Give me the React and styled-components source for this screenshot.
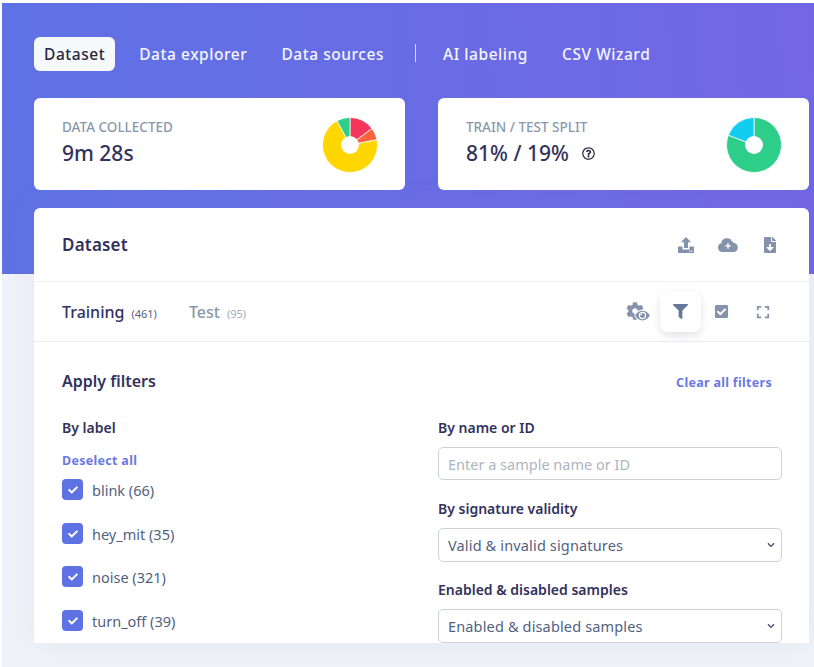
import React from "react";
import styled, { createGlobalStyle } from "styled-components";
import { FaCog, FaEye, FaFilter, FaCheckSquare, FaExpand, FaFileDownload, FaRegQuestionCircle, FaCheck, FaChevronDown } from "react-icons/fa";

const Global = createGlobalStyle`
  html, body { margin: 0; padding: 0; background: #fff; overflow: hidden; }
  * { box-sizing: border-box; }
  body { font-family: "Noto Sans", "Liberation Sans", sans-serif; }
`;

const Shell = styled.div`
  margin: 3px 0 0 2px;
  height: 664px;
  overflow: hidden;
  padding: 34px 5px 0 32px;
  background: linear-gradient(87deg, #5e72e4 0%, #7266e4 100%) top / 100% 271px no-repeat, #f0f2f9;
`;
const Nav = styled.nav`
  display: flex;
  align-items: center;
  height: 34px;
  margin-bottom: 27px;
`;
const NavItem = styled.a`
  height: 34px;
  line-height: 34px;
  padding: 0 10px;
  margin-right: ${p => p.$gap ?? 14}px;
  border-radius: 6px;
  font-size: 15.5px;
  font-weight: 500;
  letter-spacing: 0.55px;
  white-space: nowrap;
  color: ${p => (p.$active ? "#26283a" : "#f4f5fd")};
  background: ${p => (p.$active ? "#f6f9fc" : "transparent")};
`;
const NavDivider = styled.span`
  width: 1px;
  height: 18px;
  margin: -2px 17px 0 7px;
  background: rgba(255, 255, 255, 0.75);
`;
const Stats = styled.div`
  display: grid;
  grid-template-columns: 371px 371px;
  column-gap: 33px;
  margin-bottom: 18px;
`;
const StatCard = styled.section`
  height: 92px;
  padding: 0 27px 0 28px;
  background: #fff;
  border-radius: 6px;
  display: flex;
  align-items: center;
  justify-content: space-between;
`;
const StatText = styled.div`
  display: flex;
  flex-direction: column;
  margin-top: -2px;
`;
const StatTitle = styled.span`
  font-size: 13.5px;
  font-weight: 500;
  line-height: 20px;
  color: #8898aa;
  letter-spacing: 0;
`;
const StatValue = styled.span`
  font-size: 21px;
  font-weight: 500;
  line-height: 32px;
  color: #32325d;
  display: flex;
  align-items: center;
`;
const HelpIcon = styled(FaRegQuestionCircle)`
  width: 13px;
  height: 13px;
  margin-left: 13px;
  color: #26283a;
`;
const PieSvg = styled.svg`
  width: 56px;
  height: 56px;
  margin-top: 1px;
  flex: none;
`;
const Panel = styled.main`
  background: #fff;
  border-radius: 6px 6px 0 0;
  box-shadow: 0 0 2rem 0 rgba(136, 152, 170, 0.1);
`;
const PanelHead = styled.header`
  height: 74px;
  padding: 0 31px 0 28px;
  display: flex;
  align-items: center;
  justify-content: space-between;
  border-bottom: 1px solid #edeff3;
`;
const PanelTitle = styled.h2`
  margin: 0;
  font-size: 17px;
  font-weight: 600;
  color: #32325d;
  letter-spacing: 0.2px;
`;
const IconRow = styled.div`
  display: flex;
  align-items: center;
  gap: ${p => p.$gap}px;
  color: #8492ab;
`;
const Tabs = styled.div`
  height: 60px;
  padding: 0 26px 0 28px;
  display: flex;
  align-items: center;
  justify-content: space-between;
  border-bottom: 1px solid #e9ecef;
`;
const TabList = styled.div`
  display: flex;
  align-items: baseline;
  gap: 32px;
`;
const Tab = styled.span`
  font-size: 16px;
  font-weight: 500;
  color: ${p => (p.$active ? "#32325d" : "#8898aa")};
`;
const TabCount = styled.small`
  font-size: 11px;
  font-weight: 400;
  margin-left: 7px;
  color: ${p => (p.$active ? "#525f7f" : "#a0acbd")};
`;
const ToolButton = styled.div`
  width: 41px;
  height: 41px;
  border-radius: 8px;
  display: flex;
  align-items: center;
  justify-content: center;
  background: ${p => (p.$active ? "#fff" : "transparent")};
  box-shadow: ${p => (p.$active ? "0 4px 8px rgba(50, 50, 93, 0.13)" : "none")};
  color: ${p => (p.$active ? "#66789a" : "#8492ab")};
`;
const CogEyeWrap = styled.div`
  position: relative;
  width: 25px;
  height: 20px;
  margin-right: 9px;
`;
const CogPart = styled(FaCog)`
  position: absolute;
  left: 0;
  top: 0;
  width: 18px;
  height: 18px;
`;
const EyePart = styled(FaEye)`
  position: absolute;
  left: 9px;
  top: 7px;
  width: 15px;
  height: 13px;
  padding: 0;
  stroke: #fff;
  stroke-width: 60px;
  paint-order: stroke;
  overflow: visible;
`;
const Filters = styled.div`
  padding: 27px 27px 0 28px;
`;
const FilterHead = styled.div`
  display: flex;
  align-items: center;
  justify-content: space-between;
  padding-right: 10px;
  margin-bottom: 25px;
  height: 24px;
`;
const FilterTitle = styled.h3`
  margin: 0;
  font-size: 16px;
  font-weight: 600;
  color: #32325d;
`;
const LinkText = styled.a`
  font-size: 12.5px;
  font-weight: 700;
  letter-spacing: 0.3px;
  color: #6a79e4;
  display: block;
  line-height: 18px;
`;
const ClearLink = styled(LinkText)`
  margin-top: 4px;
`;
const Columns = styled.div`
  display: grid;
  grid-template-columns: 376px 344px;
`;
const Column = styled.div`
  display: flex;
  flex-direction: column;
`;
const FieldLabel = styled.label`
  display: block;
  font-size: 14px;
  font-weight: 600;
  line-height: 20px;
  color: #32325d;
  margin-bottom: ${p => p.$mb ?? 9}px;
`;
const CheckRow = styled.div`
  display: flex;
  align-items: center;
  height: 21px;
  margin-bottom: ${p => p.$mb}px;
`;
const CheckBox = styled.span`
  width: 21px;
  height: 21px;
  border-radius: 4px;
  background: #5e72e4;
  color: #fff;
  display: flex;
  align-items: center;
  justify-content: center;
  margin-right: 9px;
  font-size: 10px;
`;
const CheckText = styled.span`
  font-size: 14.5px;
  color: #525f7f;
`;
const TextInput = styled.input`
  width: 100%;
  height: 33px;
  padding: 0 9px;
  border: 1px solid #cdd2da;
  border-radius: 5px;
  font: 400 14.5px "Noto Sans", sans-serif;
  color: #525f7f;
  margin-bottom: 19px;
  outline: none;
  &::placeholder { color: #adb5bd; opacity: 1; }
`;
const SelectWrap = styled.div`
  position: relative;
  height: 34px;
  margin-bottom: ${p => p.$mb ?? 18}px;
`;
const Select = styled.select`
  appearance: none;
  width: 100%;
  height: 34px;
  padding: 0 9px;
  border: 1px solid #cdd2da;
  border-radius: 5px;
  background: #fff;
  font: 400 14.5px "Noto Sans", sans-serif;
  letter-spacing: 0.15px;
  color: #525f7f;
  outline: none;
`;
const Chevron = styled(FaChevronDown)`
  position: absolute;
  right: 6px;
  top: 13px;
  width: 10px;
  height: 8px;
  color: #3f4d69;
  pointer-events: none;
`;

const polar = (r, deg) => {
  const a = ((deg - 90) * Math.PI) / 180;
  return [28 + r * Math.cos(a), 28 + r * Math.sin(a)];
};
const slicePath = (from, to) => {
  const [x1, y1] = polar(27.5, from);
  const [x2, y2] = polar(27.5, to);
  const large = to - from > 180 ? 1 : 0;
  return `M28 28L${x1} ${y1}A27.5 27.5 0 ${large} 1 ${x2} ${y2}Z`;
};
const Pie = ({ slices }) => (
  <PieSvg viewBox="0 0 56 56">
    {slices.map(([from, to, color]) => (
      <path key={color} d={slicePath(from, to)} fill={color} stroke="#fff" strokeOpacity="0.75" strokeWidth="1" />
    ))}
    <circle cx="28" cy="28" r="9" fill="#fff" />
  </PieSvg>
);

const UploadIcon = () => (
  <svg width="16" height="16" viewBox="0 0 16 16" fill="currentColor">
    <path d="M8 0L13.2 5.2H10V11H6V5.2H2.8Z" />
    <path d="M0 9.5H4.5V12.5H11.5V9.5H16V16H0Z" />
    <rect x="11" y="13.6" width="1.3" height="1" fill="#fff" />
    <rect x="13.2" y="13.6" width="1.3" height="1" fill="#fff" />
  </svg>
);
const CloudPlusIcon = () => (
  <svg width="20" height="14" viewBox="0 0 20 14">
    <path fill="currentColor" d="M4.5 14A4.5 4.5 0 0 1 3.2 5.2 5.6 5.6 0 0 1 8.8.2 5.2 5.2 0 0 1 14 3.4 3.4 3.4 0 0 1 16 4.9 4.6 4.6 0 0 1 15.5 14Z" />
    <path fill="#fff" d="M9.3 5H10.7V7.2H12.9V8.6H10.7V10.8H9.3V8.6H7.1V7.2H9.3Z" />
  </svg>
);

const labels = [["blink (66)", 23], ["hey_mit (35)", 22], ["noise (321)", 23], ["turn_off (39)", 0]];

export default function App() {
  return (
    <>
      <Global />
      <Shell>
        <Nav>
          <NavItem $active>Dataset</NavItem>
          <NavItem>Data explorer</NavItem>
          <NavItem>Data sources</NavItem>
          <NavDivider />
          <NavItem>AI labeling</NavItem>
          <NavItem>CSV Wizard</NavItem>
        </Nav>
        <Stats>
          <StatCard>
            <StatText>
              <StatTitle>DATA COLLECTED</StatTitle>
              <StatValue>9m 28s</StatValue>
            </StatText>
            <Pie slices={[[0, 53, "#f5365c"], [53, 79, "#fb6340"], [79, 332, "#ffd600"], [332, 360, "#2dce89"]]} />
          </StatCard>
          <StatCard>
            <StatText>
              <StatTitle>TRAIN / TEST SPLIT</StatTitle>
              <StatValue>81% / 19%<HelpIcon /></StatValue>
            </StatText>
            <Pie slices={[[0, 291, "#2dce89"], [291, 360, "#11cdef"]]} />
          </StatCard>
        </Stats>
        <Panel>
          <PanelHead>
            <PanelTitle>Dataset</PanelTitle>
            <IconRow $gap={24}>
              <UploadIcon />
              <CloudPlusIcon />
              <FaFileDownload size={16} />
            </IconRow>
          </PanelHead>
          <Tabs>
            <TabList>
              <Tab $active>Training<TabCount $active>(461)</TabCount></Tab>
              <Tab>Test<TabCount>(95)</TabCount></Tab>
            </TabList>
            <IconRow $gap={0}>
              <CogEyeWrap><CogPart /><EyePart /></CogEyeWrap>
              <ToolButton $active><FaFilter size={15} /></ToolButton>
              <ToolButton><FaCheckSquare size={15} /></ToolButton>
              <ToolButton><FaExpand size={14} /></ToolButton>
            </IconRow>
          </Tabs>
          <Filters>
            <FilterHead>
              <FilterTitle>Apply filters</FilterTitle>
              <ClearLink>Clear all filters</ClearLink>
            </FilterHead>
            <Columns>
              <Column>
                <FieldLabel $mb={14}>By label</FieldLabel>
                <LinkText>Deselect all</LinkText>
                <div style={{ height: 9 }} />
                {labels.map(([text, mb]) => (
                  <CheckRow key={text} $mb={mb}>
                    <CheckBox><FaCheck /></CheckBox>
                    <CheckText>{text}</CheckText>
                  </CheckRow>
                ))}
              </Column>
              <Column>
                <FieldLabel>By name or ID</FieldLabel>
                <TextInput placeholder="Enter a sample name or ID" />
                <FieldLabel>By signature validity</FieldLabel>
                <SelectWrap>
                  <Select defaultValue="all"><option value="all">Valid &amp; invalid signatures</option></Select>
                  <Chevron />
                </SelectWrap>
                <FieldLabel>Enabled &amp; disabled samples</FieldLabel>
                <SelectWrap $mb={0}>
                  <Select defaultValue="all"><option value="all">Enabled &amp; disabled samples</option></Select>
                  <Chevron />
                </SelectWrap>
              </Column>
            </Columns>
          </Filters>
        </Panel>
      </Shell>
    </>
  );
}
